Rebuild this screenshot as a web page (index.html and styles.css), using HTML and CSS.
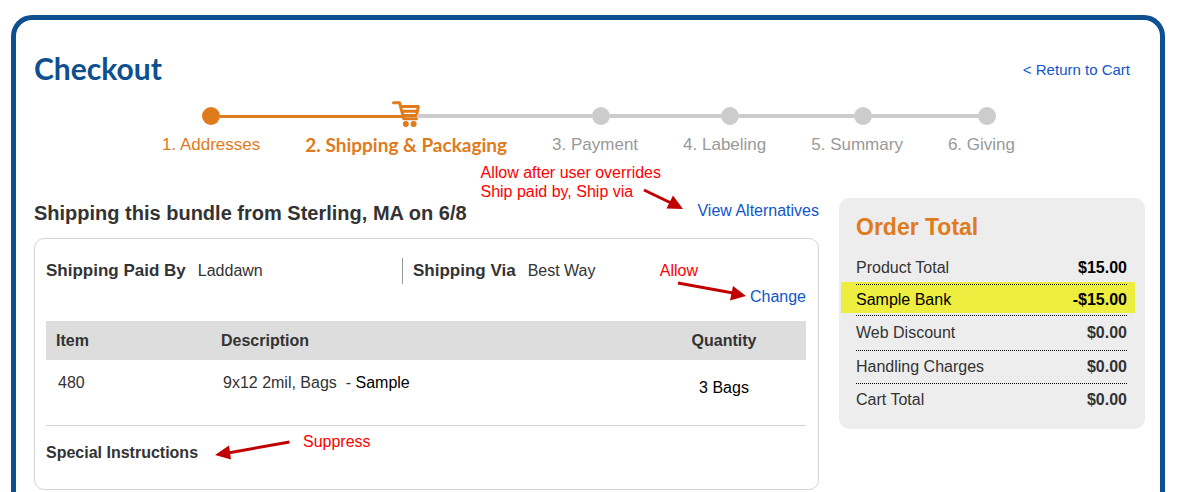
FILE: index.html
```html
<!DOCTYPE html>
<html lang="en">
<head>
<meta charset="utf-8">
<title>Checkout</title>
<link rel="stylesheet" href="styles.css">
</head>
<body>
<main class="frame">
  <header class="page-head">
    <h1>Checkout</h1>
    <a class="return" href="#cart">&lt; Return to Cart</a>
  </header>

  <ol class="steps">
    <li class="step done">
      <div class="marker"><span class="line before"></span><span class="dot"></span><span class="line after"></span></div>
      <span class="label">1. Addresses</span>
    </li>
    <li class="step current" aria-current="step">
      <div class="marker"><span class="line before"></span>
        <svg class="cart" width="28" height="28" viewBox="0 0 28 28" aria-hidden="true">
          <path d="M1.500 1.800H7.600L11.800 17.800H24.500M9 5.600H26.300L24.600 14.400H11M10 10.200H25.200" fill="none" stroke="#e07b1d" stroke-width="3" stroke-linecap="round" stroke-linejoin="round"/>
          <circle cx="13.800" cy="23" r="3" fill="#e07b1d"/>
          <circle cx="21.600" cy="23" r="3" fill="#e07b1d"/>
        </svg>
        <span class="line after"></span></div>
      <span class="label">2. Shipping &amp; Packaging</span>
    </li>
    <li class="step todo">
      <div class="marker"><span class="line before"></span><span class="dot"></span><span class="line after"></span></div>
      <span class="label">3. Payment</span>
    </li>
    <li class="step todo">
      <div class="marker"><span class="line before"></span><span class="dot"></span><span class="line after"></span></div>
      <span class="label">4. Labeling</span>
    </li>
    <li class="step todo">
      <div class="marker"><span class="line before"></span><span class="dot"></span><span class="line after"></span></div>
      <span class="label">5. Summary</span>
    </li>
    <li class="step todo">
      <div class="marker"><span class="line before"></span><span class="dot"></span><span class="line after"></span></div>
      <span class="label">6. Giving</span>
    </li>
  </ol>

  <div class="columns">
    <section class="bundle">
      <div class="bundle-head">
        <h2>Shipping this bundle from Sterling, MA on 6/8</h2>
        <a href="#alternatives">View Alternatives</a>
      </div>
      <div class="card">
        <dl class="shipping">
          <div class="pair"><dt>Shipping Paid By</dt><dd>Laddawn</dd></div>
          <div class="pair"><dt>Shipping Via</dt><dd>Best Way</dd></div>
        </dl>
        <a class="change" href="#change">Change</a>
        <table class="items">
          <thead>
            <tr><th class="item">Item</th><th>Description</th><th class="qty">Quantity</th></tr>
          </thead>
          <tbody>
            <tr><td>480</td><td>9x12 2mil, Bags&nbsp; - <span class="added">Sample</span></td><td class="qty added">3 Bags</td></tr>
          </tbody>
        </table>
        <h3>Special Instructions</h3>
      </div>

      <p class="note note-override">Allow after user overrides<br>Ship paid by, Ship via</p>
      <svg class="arrow arrow-override" width="42" height="24" viewBox="0 0 42 24" aria-hidden="true">
        <path d="M2 3L29 16" stroke="#c00000" stroke-width="3"/><path d="M24.500 21.500L31 8.500L41 22Z" fill="#c00000"/>
      </svg>
      <p class="note note-allow">Allow</p>
      <svg class="arrow arrow-allow" width="70" height="22" viewBox="0 0 70 22" aria-hidden="true">
        <path d="M1 4L56 14" stroke="#c00000" stroke-width="3"/><path d="M53 21.500L56 7L69 17Z" fill="#c00000"/>
      </svg>
      <p class="note note-suppress">Suppress</p>
      <svg class="arrow arrow-suppress" width="77" height="22" viewBox="0 0 77 22" aria-hidden="true">
        <path d="M75.500 3L14 14" stroke="#c00000" stroke-width="3"/><path d="M15 6.500L17 20.500L1 16Z" fill="#c00000"/>
      </svg>
    </section>

    <aside class="total">
      <h2>Order Total</h2>
      <dl>
        <div class="row"><dt>Product Total</dt><dd class="added">$15.00</dd></div>
        <div class="row added bank"><dt>Sample Bank</dt><dd>-$15.00</dd></div>
        <div class="row discount"><dt>Web Discount</dt><dd>$0.00</dd></div>
        <div class="row"><dt>Handling Charges</dt><dd>$0.00</dd></div>
        <div class="row"><dt>Cart Total</dt><dd>$0.00</dd></div>
      </dl>
    </aside>
  </div>
</main>
</body>
</html>
```
FILE: styles.css
```css
* {
  box-sizing: border-box;
}

body {
  display: flex;
  min-height: 100vh;
  margin: 0;
  padding: 15px 12px 0 11px;
  background: #fff;
  color: #333;
  font: 16px/20px "Liberation Sans", Arial, sans-serif;
}

h1, h2, h3, p, dl, dd, ol {
  margin: 0;
  padding: 0;
}

a {
  color: #1155cc;
  text-decoration: none;
}

.frame {
  flex: 1;
  padding: 30px 15px 2px 18px;
  border: 5px solid #0d4f8f;
  border-bottom: 0;
  border-radius: 21px 21px 0 0;
}

.page-head {
  display: flex;
  align-items: center;
  justify-content: space-between;
  padding-right: 15px;
}

h1 {
  color: #0d4f8f;
  font: bold 30px/36px Lato, sans-serif;
}

.return {
  padding-top: 3px;
  font-size: 15px;
}

/* Progress steps */
.steps {
  display: flex;
  justify-content: center;
  margin-top: 16px;
  padding-right: 3px;
  list-style: none;
  white-space: nowrap;
}

.step {
  color: #999;
  font-size: 17px;
  text-align: center;
}

.marker {
  display: flex;
  align-items: center;
  height: 28px;
  margin-bottom: 5px;
}

.label {
  display: block;
  padding: 0 22px 0 23px;
}

.line {
  flex: 1 1 0;
  height: 4px;
  background: #ccc;
}

.todo .before {
  flex-basis: 12px;
}

.dot {
  width: 18px;
  height: 18px;
  border-radius: 50%;
  background: #ccc;
}

.done,
.current {
  color: #e07b1d;
}

.current {
  font: bold 19px/20px Lato, sans-serif;
}

.done .dot,
.done .line,
.current .before {
  background: #e07b1d;
}

.done .line,
.current .before {
  height: 3px;
}

.current .before {
  flex-basis: 8px;
  margin-right: -11px;
}

.current .after {
  margin-left: -3px;
}

.cart {
  margin-bottom: 2px;
}

.step:first-child .before,
.step:last-child .after {
  background: none;
}

/* Content */
.columns {
  display: grid;
  grid-template-columns: 1fr 306px;
  align-items: start;
  gap: 20px;
  margin-top: 43px;
}

.bundle {
  position: relative;
}

.bundle-head {
  display: flex;
  justify-content: space-between;
  height: 40px;
  line-height: 25px;
}

.bundle-head h2 {
  padding-top: 3px;
  font-size: 20px;
}

.card {
  padding: 19px 12px 26px 11px;
  border: 1px solid #d4d4d4;
  border-radius: 10px;
}

.shipping {
  display: flex;
  line-height: 26px;
}

.pair {
  display: flex;
  gap: 12px;
  flex: 0 0 356px;
}

.pair + .pair {
  flex: 1;
  padding-left: 10px;
  border-left: 1px solid #999;
}

.pair dt {
  font-size: 17px;
  font-weight: bold;
}

.change {
  display: block;
  width: max-content;
  margin: 3px 0 14px auto;
}

.items {
  width: 100%;
  border-collapse: collapse;
  border-bottom: 1px solid #d4d4d4;
  table-layout: fixed;
}

.items th {
  height: 39px;
  padding: 0 10px;
  background: #ddd;
  text-align: left;
}

.items .item {
  width: 165px;
}

.items td {
  height: 65px;
  padding: 13px 12px 0;
  vertical-align: top;
}

.items th.qty {
  width: 164px;
  text-align: center;
}

.items td.qty {
  padding-top: 18px;
  text-align: center;
}

.added {
  color: #000;
}

.card h3 {
  margin-top: 17px;
  font-size: 16px;
}

/* Review notes laid over the page */
.note,
.arrow {
  position: absolute;
}

.note {
  color: #f00;
  line-height: 19px;
}

.note-override {
  top: -35px;
  right: 158px;
}

.arrow-override {
  top: -11px;
  right: 135px;
}

.note-allow {
  top: 63px;
  right: 121px;
}

.arrow-allow {
  top: 81px;
  right: 72px;
}

.note-suppress {
  top: 234px;
  left: 269px;
}

.arrow-suppress {
  top: 241px;
  left: 180px;
}

/* Order total */
.total {
  padding: 17px 18px 13px 17px;
  border-radius: 10px;
  background: #ededed;
}

.total h2 {
  margin-bottom: 13px;
  color: #e07b1d;
  font-size: 23px;
  line-height: 24px;
}

.total dl {
  position: relative;
  z-index: 0;
}

.row {
  display: flex;
  justify-content: space-between;
  border-bottom: 1px dotted #000;
  line-height: 32px;
}

.row:last-child {
  border-bottom: 0;
}

.row dd {
  font-weight: bold;
}

.bank {
  position: relative;
  line-height: 30px;
}

.bank::before {
  content: "";
  position: absolute;
  z-index: -1;
  inset: -3px -8px 2px -15px;
  background: #eeee40;
}

.discount {
  line-height: 34px;
}
```
